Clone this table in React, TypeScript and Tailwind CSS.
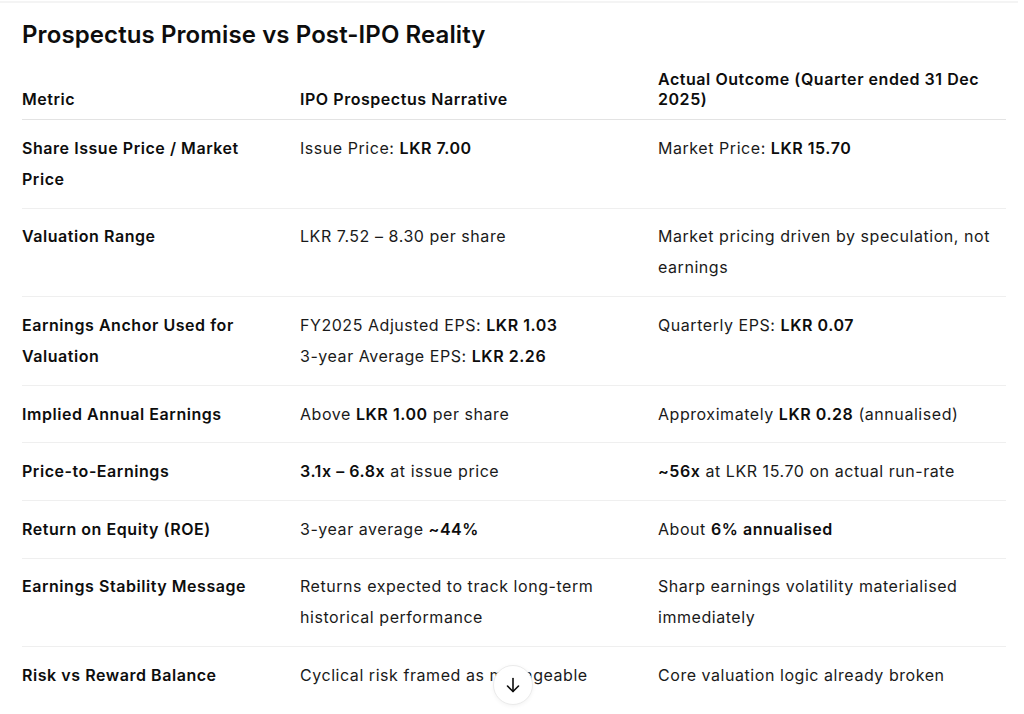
import React from "react";

type Cell = React.ReactNode;

const B = ({ children }: { children: React.ReactNode }) => (
  <span className="font-semibold text-[#0d0d0d]">{children}</span>
);

const rows: [string, Cell, Cell][] = [
  [
    "Share Issue Price / Market Price",
    <>Issue Price: <B>LKR 7.00</B></>,
    <>Market Price: <B>LKR 15.70</B></>,
  ],
  [
    "Valuation Range",
    <>LKR 7.52 – 8.30 per share</>,
    <>Market pricing driven by speculation, not earnings</>,
  ],
  [
    "Earnings Anchor Used for Valuation",
    <>
      FY2025 Adjusted EPS: <B>LKR 1.03</B>
      <br />
      3-year Average EPS: <B>LKR 2.26</B>
    </>,
    <>Quarterly EPS: <B>LKR 0.07</B></>,
  ],
  [
    "Implied Annual Earnings",
    <>Above <B>LKR 1.00</B> per share</>,
    <>Approximately <B>LKR 0.28</B> (annualised)</>,
  ],
  [
    "Price-to-Earnings",
    <><B>3.1x – 6.8x</B> at issue price</>,
    <><B>~56x</B> at LKR 15.70 on actual run-rate</>,
  ],
  [
    "Return on Equity (ROE)",
    <>3-year average <B>~44%</B></>,
    <>About <B>6% annualised</B></>,
  ],
  [
    "Earnings Stability Message",
    <>Returns expected to track long-term historical performance</>,
    <>Sharp earnings volatility materialised immediately</>,
  ],
  [
    "Risk vs Reward Balance",
    <>Cyclical risk framed as manageable</>,
    <>Core valuation logic already broken</>,
  ],
];

export default function App() {
  return (
    <div
      className="relative h-[714px] w-[1024px] overflow-hidden bg-white text-[#0d0d0d]"
      style={{ fontFamily: "Inter, 'Noto Sans', sans-serif" }}
    >
      <div className="mt-px h-[2px] w-[1018px] bg-[#f4f4f4]" />
      <div className="pl-[22px] pt-[16px]">
        <h2 className="mb-[18px] text-[24px] font-semibold leading-[32px] tracking-[0.1px]">
          Prospectus Promise vs Post-IPO Reality
        </h2>
        <table className="w-[984px] table-fixed border-collapse text-[16px] tracking-[0.55px]">
          <colgroup>
            <col className="w-[278px]" />
            <col className="w-[358px]" />
            <col className="w-[348px]" />
          </colgroup>
          <thead>
            <tr className="border-b border-[#e3e3e3]">
              <th className="pb-[10px] pr-4 text-left align-bottom font-semibold leading-[20px]">
                Metric
              </th>
              <th className="pb-[10px] pr-4 text-left align-bottom font-semibold leading-[20px]">
                IPO Prospectus Narrative
              </th>
              <th className="pb-[10px] text-left align-bottom font-semibold leading-[20px]">
                Actual Outcome (Quarter ended 31 Dec 2025)
              </th>
            </tr>
          </thead>
          <tbody>
            {rows.map((r, i) => (
              <tr
                key={i}
                className="border-b border-[#efefef] last:border-b-0"
              >
                <td className="py-[12.8px] pr-4 align-top font-semibold leading-[31px]">
                  {r[0]}
                </td>
                <td className="py-[12.8px] pr-4 align-top leading-[31px] text-[#1a1a1a]">
                  {r[1]}
                </td>
                <td className="py-[12.8px] align-top leading-[31px] text-[#1a1a1a]">
                  {r[2]}
                </td>
              </tr>
            ))}
          </tbody>
        </table>
      </div>
      <button className="absolute left-[493px] top-[665px] flex h-[40px] w-[40px] items-center justify-center rounded-full border border-[#ebebeb] bg-white shadow-[0_1px_4px_rgba(0,0,0,0.05)]">
        <svg
          width="20"
          height="20"
          viewBox="0 0 20 20"
          fill="none"
          stroke="#0d0d0d"
          strokeWidth="1.6"
          strokeLinecap="round"
          strokeLinejoin="round"
        >
          <path d="M10 3.5v13" />
          <path d="M4.5 11l5.5 5.5 5.5-5.5" />
        </svg>
      </button>
    </div>
  );
}
